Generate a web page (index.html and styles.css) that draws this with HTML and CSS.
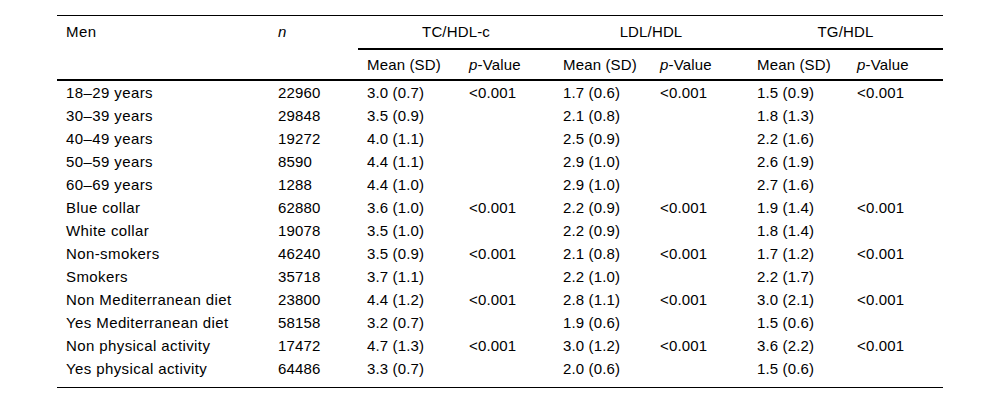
FILE: index.html
```html
<!DOCTYPE html>
<html>
<head>
<meta charset="utf-8">
<link rel="stylesheet" href="styles.css">
</head>
<body>
<table class="data">
  <colgroup>
    <col class="c-label"><col class="c-n">
    <col class="c-m1"><col class="c-p1">
    <col class="c-m2"><col class="c-p2">
    <col class="c-m3"><col class="c-p3">
  </colgroup>
  <thead>
    <tr class="h1">
      <th class="label">Men</th>
      <th><i>n</i></th>
      <th colspan="2" class="grp">TC/HDL-c</th>
      <th colspan="2" class="grp">LDL/HDL</th>
      <th colspan="2" class="grp">TG/HDL</th>
    </tr>
    <tr class="h2">
      <th></th>
      <th></th>
      <th>Mean (SD)</th><th><i>p</i>-Value</th>
      <th>Mean (SD)</th><th><i>p</i>-Value</th>
      <th>Mean (SD)</th><th><i>p</i>-Value</th>
    </tr>
  </thead>
  <tbody>
    <tr><td class="label">18–29 years</td><td>22960</td><td>3.0 (0.7)</td><td>&lt;0.001</td><td>1.7 (0.6)</td><td>&lt;0.001</td><td>1.5 (0.9)</td><td>&lt;0.001</td></tr>
    <tr><td class="label">30–39 years</td><td>29848</td><td>3.5 (0.9)</td><td></td><td>2.1 (0.8)</td><td></td><td>1.8 (1.3)</td><td></td></tr>
    <tr><td class="label">40–49 years</td><td>19272</td><td>4.0 (1.1)</td><td></td><td>2.5 (0.9)</td><td></td><td>2.2 (1.6)</td><td></td></tr>
    <tr><td class="label">50–59 years</td><td>8590</td><td>4.4 (1.1)</td><td></td><td>2.9 (1.0)</td><td></td><td>2.6 (1.9)</td><td></td></tr>
    <tr><td class="label">60–69 years</td><td>1288</td><td>4.4 (1.0)</td><td></td><td>2.9 (1.0)</td><td></td><td>2.7 (1.6)</td><td></td></tr>
    <tr><td class="label">Blue collar</td><td>62880</td><td>3.6 (1.0)</td><td>&lt;0.001</td><td>2.2 (0.9)</td><td>&lt;0.001</td><td>1.9 (1.4)</td><td>&lt;0.001</td></tr>
    <tr><td class="label">White collar</td><td>19078</td><td>3.5 (1.0)</td><td></td><td>2.2 (0.9)</td><td></td><td>1.8 (1.4)</td><td></td></tr>
    <tr><td class="label">Non-smokers</td><td>46240</td><td>3.5 (0.9)</td><td>&lt;0.001</td><td>2.1 (0.8)</td><td>&lt;0.001</td><td>1.7 (1.2)</td><td>&lt;0.001</td></tr>
    <tr><td class="label">Smokers</td><td>35718</td><td>3.7 (1.1)</td><td></td><td>2.2 (1.0)</td><td></td><td>2.2 (1.7)</td><td></td></tr>
    <tr><td class="label">Non Mediterranean diet</td><td>23800</td><td>4.4 (1.2)</td><td>&lt;0.001</td><td>2.8 (1.1)</td><td>&lt;0.001</td><td>3.0 (2.1)</td><td>&lt;0.001</td></tr>
    <tr><td class="label">Yes Mediterranean diet</td><td>58158</td><td>3.2 (0.7)</td><td></td><td>1.9 (0.6)</td><td></td><td>1.5 (0.6)</td><td></td></tr>
    <tr><td class="label">Non physical activity</td><td>17472</td><td>4.7 (1.3)</td><td>&lt;0.001</td><td>3.0 (1.2)</td><td>&lt;0.001</td><td>3.6 (2.2)</td><td>&lt;0.001</td></tr>
    <tr class="last"><td class="label">Yes physical activity</td><td>64486</td><td>3.3 (0.7)</td><td></td><td>2.0 (0.6)</td><td></td><td>1.5 (0.6)</td><td></td></tr>
  </tbody>
</table>
</body>
</html>
```

FILE: styles.css
```css
html, body {
  margin: 0;
  padding: 0;
  background: #fff;
}
body {
  font-family: "Liberation Sans", Arial, sans-serif;
  font-size: 15px;
  color: #000;
}
.data {
  border-collapse: collapse;
  margin: 15px 0 0 57px;
  width: 886px;
  table-layout: fixed;
  border-top: 1px solid #000;
  border-bottom: 1px solid #000;
}
.c-label { width: 212px; }
.c-n { width: 89px; }
.c-m1 { width: 102px; }
.c-p1 { width: 94px; }
.c-m2 { width: 97px; }
.c-p2 { width: 97px; }
.c-m3 { width: 100px; }
.c-p3 { width: 95px; }
.data th, .data td {
  text-align: left;
  font-weight: normal;
  padding: 0 0 0 9px;
  white-space: nowrap;
  line-height: 17px;
  vertical-align: middle;
  letter-spacing: 0.15px;
}
.data .label {
  letter-spacing: 0.4px;
}
.data .h1 th {
  height: 30px;
  padding-bottom: 2px;
}
.data .h1 th.grp {
  text-align: center;
  padding-left: 0;
  border-bottom: 2px solid #000;
}
.data .h2 th {
  height: 29px;
  border-bottom: 2px solid #000;
}
.data td {
  height: 23px;
}
.data tr.last td {
  height: 23px;
  padding-bottom: 7px;
}
```
